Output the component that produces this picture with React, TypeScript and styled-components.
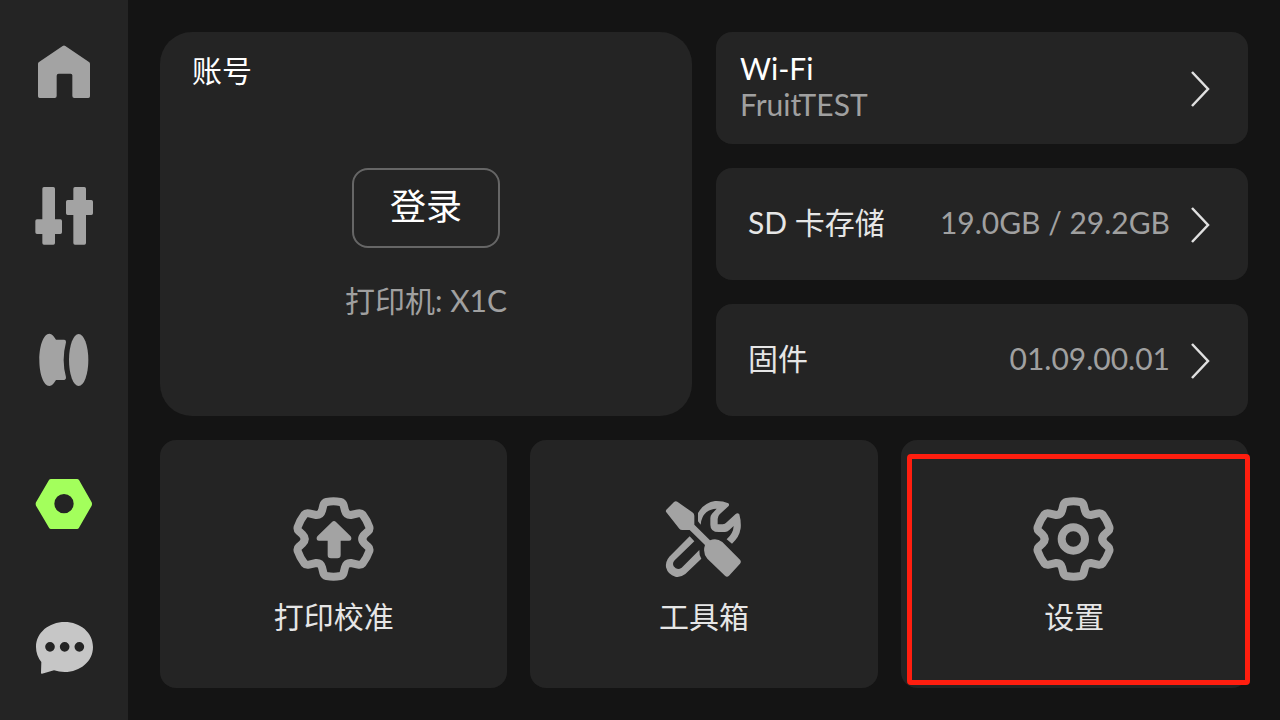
import React from "react";
import styled, { createGlobalStyle } from "styled-components";

const GlobalStyle = createGlobalStyle`
  * { box-sizing: border-box; }
  body {
    margin: 0;
    background: #141414;
    color: #e6e6e6;
    font-family: Lato, "Noto Sans CJK SC", sans-serif;
    font-size: 30px;
    line-height: 36px;
  }
  button { font: inherit; color: inherit; border: 0; margin: 0; cursor: pointer; }
`;

const Screen = styled.div`
  display: flex;
  min-height: 100vh;
`;

const Sidebar = styled.nav`
  flex: 0 0 128px;
  display: flex;
  flex-direction: column;
  background: #242424;
`;

const NavButton = styled.button<{ $color?: string }>`
  flex: 1;
  display: flex;
  align-items: center;
  justify-content: center;
  padding: 0;
  background: none;
  color: ${(p) => p.$color ?? "#a3a3a3"};
`;

const NavIcon = styled.svg`
  width: 60px;
  height: 60px;
  fill: currentColor;
`;

const Main = styled.main`
  flex: 1;
  display: flex;
  flex-direction: column;
  gap: 24px;
  padding: 32px;
`;

const Overview = styled.div`
  display: grid;
  grid-template-columns: 1fr 1fr;
  gap: 24px;
`;

const Account = styled.section`
  display: flex;
  flex-direction: column;
  align-items: center;
  padding: 20px 32px;
  border-radius: 32px;
  background: #242424;
`;

const AccountTitle = styled.h2`
  align-self: flex-start;
  margin: 0 0 80px;
  font-size: 30px;
  font-weight: 400;
  line-height: 36px;
  color: #fff;
`;

const LoginButton = styled.button`
  padding: 16px 36px 20px;
  border: 2px solid #666;
  border-radius: 16px;
  background: none;
  color: #fff;
  font-size: 36px;
  line-height: 40px;
`;

const PrinterName = styled.p`
  margin: 34px 0 0;
  color: #a0a0a0;
`;

const Rows = styled.div`
  display: flex;
  flex-direction: column;
  gap: 24px;
`;

const Row = styled.button<{ $inset: number }>`
  display: flex;
  align-items: center;
  min-height: 112px;
  padding: 0 36px 4px ${(p) => p.$inset}px;
  border-radius: 16px;
  background: #242424;
  text-align: left;
`;

const RowLabel = styled.span<{ $bright?: boolean }>`
  display: block;
  color: ${(p) => (p.$bright ? "#fff" : "#e6e6e6")};
`;

const RowValue = styled.span`
  display: block;
  color: #a0a0a0;
`;

const RowText = styled.span`
  flex: 1;
`;

const Chevron = styled.svg`
  width: 24px;
  height: 44px;
  margin-left: 18px;
  fill: none;
  stroke: #e0e0e0;
  stroke-width: 2.5;
`;

const Tiles = styled.div`
  flex: 1;
  display: grid;
  grid-template-columns: repeat(3, 1fr);
  gap: 23px;
`;

const Tile = styled.button<{ $marked?: boolean }>`
  position: relative;
  display: flex;
  flex-direction: column;
  align-items: center;
  justify-content: center;
  gap: 14px;
  min-height: 248px;
  padding: 0;
  border-radius: 16px;
  background: #242424;

  &::after {
    content: "";
    display: ${(p) => (p.$marked ? "block" : "none")};
    position: absolute;
    inset: 14px -2px 3px 6px;
    border: 5px solid #ff1e0f;
    border-radius: 4px;
  }
`;

const TileIcon = styled.svg`
  width: 88px;
  height: 90px;
  fill: #a3a3a3;
`;

const GEAR =
  "M170 66Q190.5 62 211 66Q219 68 221 76L225 92Q229 106 243 105L264 100Q273 98 278 104Q291 121 298 141Q300 149 294 154L284 163Q270 177 284 191L294 200Q300 205 298 213Q291 233 278 250Q273 256 264 254L243 249Q229 248 225 262L221 278Q219 286 211 288Q190.5 292 170 288Q162 286 160 278L156 262Q152 248 138 249L117 254Q108 256 103 250Q90 233 83 213Q81 205 87 200L97 191Q111 177 97 163L87 154Q81 149 83 141Q90 121 103 104Q108 98 117 100L138 105Q152 106 156 92L160 76Q162 68 170 66Z";

const Gear = ({ children }: { children: React.ReactNode }) => (
  <TileIcon viewBox="60 42 264 270" aria-hidden="true">
    <path d={GEAR} fill="none" stroke="#a3a3a3" strokeWidth="24" />
    {children}
  </TileIcon>
);

const Arrow = () => (
  <Chevron viewBox="0 0 24 44" aria-hidden="true">
    <path d="M4 8L20 25L4 42" />
  </Chevron>
);

export default function App() {
  return (
    <Screen>
      <GlobalStyle />
      <Sidebar>
        <NavButton aria-label="主页">
          <NavIcon viewBox="102 66 180 180">
            <path d="M188 78Q192 75 196 78L268 127Q270 129 270 132V229Q270 234 265 234H223Q217 234 217 228V166Q217 161 212 161H176Q170 161 170 167V228Q170 234 164 234H119Q114 234 114 229V132Q114 129 116 127Z" />
          </NavIcon>
        </NavButton>
        <NavButton aria-label="控制">
          <NavIcon viewBox="102 498 180 180">
            <path d="M132 501H160Q165 501 165 506V598H181Q186 598 186 603V637Q186 642 181 642H165V669Q165 674 160 674H132Q127 674 127 669V642H111Q106 642 106 637V603Q106 598 111 598H127V506Q127 501 132 501Z" />
            <path d="M225 501H253Q258 501 258 506V540H274Q279 540 279 545V580Q279 585 274 585H258V669Q258 674 253 674H225Q220 674 220 669V585H203Q198 585 198 580V545Q198 540 203 540H220V506Q220 501 225 501Z" />
          </NavIcon>
        </NavButton>
        <NavButton aria-label="耗材">
          <NavIcon viewBox="102 60 180 180">
            <path d="M148 71C156 71 162 79 168 89H193Q199 90 198 97Q184 150 198 202Q199 209 193 210H168C162 220 156 228 148 228C131 228 118 193 118 150C118 106 131 71 148 71Z" />
            <ellipse cx="236" cy="150" rx="29" ry="78" />
          </NavIcon>
        </NavButton>
        <NavButton aria-label="设备" $color="#a3ff5c">
          <NavIcon viewBox="102 492 180 180">
            <path
              fillRule="evenodd"
              d="M153 507H231Q235 507 237 510L275 577Q277 582 275 587L237 653Q235 657 231 657H153Q149 657 147 653L108 587Q106 582 108 577L147 510Q149 507 153 507ZM192 552A29 29 0 1 0 192 610A29 29 0 1 0 192 552Z"
            />
          </NavIcon>
        </NavButton>
        <NavButton aria-label="消息" $color="#c6c6c6">
          <NavIcon viewBox="42 54 180 180">
            <path
              fillRule="evenodd"
              d="M134 66C181 66 219 98 219 141C219 184 181 216 134 216Q117 216 102 211L66 221Q63 222 63 218L64 186Q48 166 48 141C48 98 87 66 134 66ZM90 126A14 14 0 1 0 90 155A14 14 0 1 0 90 126ZM134 126A14 14 0 1 0 134 155A14 14 0 1 0 134 126ZM178 126A14 14 0 1 0 178 155A14 14 0 1 0 178 126Z"
            />
          </NavIcon>
        </NavButton>
      </Sidebar>

      <Main>
        <Overview>
          <Account>
            <AccountTitle>账号</AccountTitle>
            <LoginButton>登录</LoginButton>
            <PrinterName>打印机: X1C</PrinterName>
          </Account>
          <Rows>
            <Row $inset={24}>
              <RowText>
                <RowLabel $bright>Wi-Fi</RowLabel>
                <RowValue>FruitTEST</RowValue>
              </RowText>
              <Arrow />
            </Row>
            <Row $inset={32}>
              <RowText>SD 卡存储</RowText>
              <RowValue>19.0GB / 29.2GB</RowValue>
              <Arrow />
            </Row>
            <Row $inset={32}>
              <RowText>固件</RowText>
              <RowValue>01.09.00.01</RowValue>
              <Arrow />
            </Row>
          </Rows>
        </Overview>

        <Tiles>
          <Tile>
            <Gear>
              <path d="M186 126Q192 120 198 126L242 169Q247 176 243 180Q241 182 237 182H212V225Q212 235 202 235H183Q173 235 173 225V182H147Q143 182 141 180Q137 176 142 169Z" />
            </Gear>
            打印校准
          </Tile>
          <Tile>
            <TileIcon viewBox="60 42 264 270" aria-hidden="true">
              <path d="M79 89L102 66Q107 62 112 65L157 97Q163 101 163 107V134L210 181Q230 173 247 186L300 239Q305 245 300 251L267 287Q261 293 255 287L202 236Q187 218 195 195L149 150H127Q121 150 118 146L79 97Q76 93 79 89Z" />
              <path d="M174 99Q192 68 225 63Q248 62 265 70Q269 73 266 78L239 103Q233 109 233 117V133H248Q255 133 260 127L287 102Q293 97 298 103Q304 125 302 145Q298 172 276 191L260 178Q280 160 281 138L268 150Q262 156 255 156H236Q211 156 211 134V114Q211 106 216 101L230 86Q212 86 199 97Q184 110 182 134L174 124Z" />
              <path d="M149 169L163 184L104 241Q96 249 101 259Q111 272 125 263L178 210Q177 225 184 236L136 282Q122 293 106 290Q84 285 78 262Q76 244 88 230Z" />
            </TileIcon>
            工具箱
          </Tile>
          <Tile $marked>
            <Gear>
              <circle cx="190" cy="177" r="35" fill="none" stroke="#a3a3a3" strokeWidth="24" />
            </Gear>
            设置
          </Tile>
        </Tiles>
      </Main>
    </Screen>
  );
}
